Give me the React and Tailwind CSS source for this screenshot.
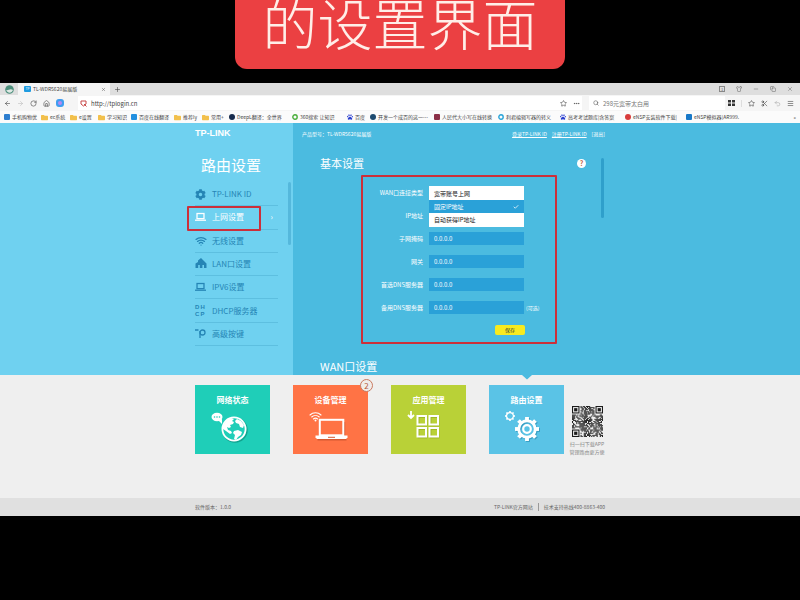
import {
  ArrowLeft,
  ArrowRight,
  RotateCw,
  House,
  Star,
  Ellipsis,
  Search,
  Scissors,
  Undo2,
  Menu,
  Plus,
  X,
  Minus,
  Copy,
  Shirt,
  Check,
  Wifi,
} from "lucide-react";
import { FaFolder, FaCog, FaPaw } from "react-icons/fa";

const bookmarks = [
  { label: "手机购物优", icon: "square", color: "text-[#2f7fd0]", width: "w-[25px]" },
  { label: "ec系统", icon: "folder", width: "w-[16px]" },
  { label: "e设置", icon: "folder", width: "w-[15px]" },
  { label: "学习知识", icon: "folder", width: "w-[20px]" },
  { label: "百度在线翻译", icon: "square", color: "text-[#2290e0]", width: "w-[31px]" },
  { label: "推荐ly", icon: "folder", width: "w-[15px]" },
  { label: "常用+", icon: "folder", width: "w-[14px]" },
  { label: "DeepL翻译：全世界", icon: "dot", color: "text-[#172b4d]", width: "w-[51px]" },
  { label: "360搜索 让知识", icon: "ring", color: "text-[#4aae3c]", width: "w-[43px]" },
  { label: "百度", icon: "paw", color: "text-[#2a3fd0]", width: "w-[11px]" },
  { label: "开发一个成百的这一…", icon: "dot", color: "text-[#1d4a70]", width: "w-[52px]" },
  { label: "人民代大小写在线转换", icon: "square", color: "text-[#8c3048]", width: "w-[52px]" },
  { label: "利君编辑写器的转义", icon: "ring", color: "text-[#28a4d8]", width: "w-[50px]" },
  { label: "高考考试题库|含答案", icon: "paw", color: "text-[#2a3fd0]", width: "w-[53px]" },
  { label: "eNSP安装软件下载|", icon: "dot", color: "text-[#d83c3c]", width: "w-[49px]" },
  { label: "eNSP模拟器(AR999.", icon: "square", color: "text-[#1878c8]", width: "w-[54px]" },
];

const menu = [
  { label: "TP-LINK ID", icon: <FaCog size={11} /> },
  { label: "上网设置", icon: <LaptopIcon />, active: true },
  { label: "无线设置", icon: <Wifi size={12} strokeWidth={2.5} /> },
  { label: "LAN口设置", icon: <LanIcon /> },
  { label: "IPV6设置", icon: <LaptopIcon /> },
  { label: "DHCP服务器", icon: <DhcpIcon /> },
  { label: "高级按键", icon: <KeyIcon /> },
];

const fields = [
  { id: "ip", label: "IP地址" },
  { id: "mask", label: "子网掩码" },
  { id: "gateway", label: "网关" },
  { id: "dns1", label: "首选DNS服务器" },
  { id: "dns2", label: "备用DNS服务器", note: "(可选)" },
];

const tiles = [
  { label: "网络状态", color: "bg-[#1fceb8]", icon: <GlobeIcon /> },
  { label: "设备管理", color: "bg-[#ff7345]", icon: <DeviceIcon />, badge: 2 },
  { label: "应用管理", color: "bg-[#b9d137]", icon: <AppsIcon /> },
  { label: "路由设置", color: "bg-[#5ac3e6]", icon: <GearsIcon />, current: true },
];

function LaptopIcon() {
  return (
    <svg width="11" height="10" viewBox="0 0 12 10" fill="none" stroke="currentColor" strokeWidth="1.4">
      <rect x="2.2" y="1.2" width="7.6" height="5.6" />
      <path d="M0 8.5h12" />
    </svg>
  );
}

function LanIcon() {
  return (
    <svg width="12" height="11" viewBox="0 0 12 11" fill="currentColor">
      <path d="M6 0 9 3 11.5 5.5V10H9V7H7.4v3H4.8V7H3.2v3H.5V5.5L3 4V2.5z" />
    </svg>
  );
}

function DhcpIcon() {
  return (
    <span className="grid w-[11px] grid-cols-2 font-['Liberation_Sans'] text-[6px] font-bold leading-[7px]">
      <span>D</span>
      <span>H</span>
      <span>C</span>
      <span>P</span>
    </span>
  );
}

function KeyIcon() {
  return (
    <svg width="12" height="11" viewBox="0 0 12 11" fill="none" stroke="currentColor" strokeWidth="1.3">
      <path d="M0 2h3.500M5 10V3" />
      <circle cx="7.500" cy="4.500" r="2.500" />
    </svg>
  );
}

function GlobeIcon() {
  return (
    <svg width="40" height="34" viewBox="0 0 40 34">
      <ellipse cx="6" cy="6" rx="5.5" ry="4.2" fill="#fff" />
      <path d="M7 9l4 4v-5z" fill="#fff" />
      <g fill="#1fceb8">
        <circle cx="3.5" cy="6" r=".8" />
        <circle cx="6" cy="6" r=".8" />
        <circle cx="8.5" cy="6" r=".8" />
      </g>
      <circle cx="24" cy="19" r="12" fill="none" stroke="#12a28f" strokeWidth="1.5" />
      <circle cx="23" cy="18" r="11.6" fill="#1fceb8" stroke="#fff" strokeWidth="1.8" />
      <path
        d="M12 15c2-4 4-7 8-8l3 1-2 2 2 1-1 2-3 1 1 2-2 1-2-1 1 3 3 1 1 2-2 1-4-3-3-2z"
        fill="#fff"
      />
      <path d="M23 20l4-1 4 2-1 3-3 2-2 3-2-1 1-4-2-2z" fill="#fff" />
      <path d="M26 8l4 2 3 4-1 3-3-1-1-3-3-1-1-2z" fill="#fff" />
    </svg>
  );
}

function DeviceIcon() {
  return (
    <svg width="40" height="34" viewBox="0 0 40 34" fill="none">
      <g stroke="#fff" strokeWidth="1.1" strokeLinecap="round">
        <path d="M1 4c3-3 8-3 11 0" />
        <path d="M2.7 6c2.2-2 5.4-2 7.6 0" />
        <path d="M4.4 8c1.3-1.1 2.9-1.1 4.2 0" />
      </g>
      <circle cx="6.5" cy="9.4" r="1" fill="#fff" />
      <path d="M35.500 11v13.500M8.500 28.800h29" stroke="#d65a32" strokeWidth="1.400" />
      <rect x="10.800" y="8.800" width="23.500" height="15.500" fill="#ff7345" stroke="#fff" strokeWidth="2" />
      <path d="M6.500 24.500h32v2l-1.500 1.500h-29l-1.500-1.500z" fill="#fff" />
      <path d="M19 26.300h7" stroke="#d65a32" />
    </svg>
  );
}

function AppsIcon() {
  return (
    <svg width="40" height="34" viewBox="0 0 40 34" fill="none">
      <path d="M4 0v7M1 4l3 3 3-3" stroke="#fff" strokeWidth="1.800" />
      <g stroke="#9db426" strokeWidth="1.800">
        <rect x="11.500" y="6" width="8" height="8.500" />
        <rect x="23.500" y="6" width="8" height="8.500" />
        <rect x="11.500" y="18" width="8" height="8.500" />
        <rect x="23.500" y="18" width="8" height="8.500" />
      </g>
      <g stroke="#fff" strokeWidth="2">
        <rect x="10.500" y="5" width="8.500" height="8.500" />
        <rect x="22.500" y="5" width="8.500" height="8.500" />
        <rect x="10.500" y="17" width="8.500" height="8.500" />
        <rect x="22.500" y="17" width="8.500" height="8.500" />
      </g>
    </svg>
  );
}

function Gear({ cx, cy, r, color }) {
  const teeth = [0, 45, 90, 135, 180, 225, 270, 315];
  return (
    <g>
      {teeth.map((a) => (
        <rect
          key={a}
          x={cx - r * 0.16}
          y={cy - r}
          width={r * 0.32}
          height={r * 0.4}
          fill={color}
          transform={`rotate(${a} ${cx} ${cy})`}
        />
      ))}
      <circle cx={cx} cy={cy} r={r * 0.69} fill="none" stroke={color} strokeWidth={r * 0.24} />
    </g>
  );
}

function GearsIcon() {
  return (
    <svg width="40" height="34" viewBox="0 0 40 34">
      <Gear cx={5} cy={5} r={5} color="#fff" />
      <Gear cx={23} cy={19} r={12} color="#3a9fc4" />
      <Gear cx={22} cy={18} r={12} color="#fff" />
      <circle cx="22" cy="18" r="3.800" fill="none" stroke="#fff" strokeWidth="2.200" />
    </svg>
  );
}

function QrCode() {
  const size = 29;
  const corners = [
    [0, 0],
    [size - 7, 0],
    [0, size - 7],
  ];
  const cells = [];
  let seed = 7;
  for (let y = 0; y < size; y++) {
    for (let x = 0; x < size; x++) {
      seed = (seed * 1103515245 + 12345) % 2147483648;
      const inCorner = corners.some(([cx, cy]) => x >= cx - 1 && x <= cx + 7 && y >= cy - 1 && y <= cy + 7);
      if (!inCorner && seed / 2147483648 < 0.62) {
        cells.push(<rect key={`${x}-${y}`} x={x} y={y} width="1" height="1" />);
      }
    }
  }
  return (
    <svg width="31" height="31" viewBox="0 0 29 29" fill="#1c1c1c">
      {cells}
      {corners.map(([x, y]) => (
        <g key={`c${x}-${y}`}>
          <rect x={x + 0.5} y={y + 0.5} width="6" height="6" fill="none" stroke="#1c1c1c" />
          <rect x={x + 2} y={y + 2} width="3" height="3" />
        </g>
      ))}
    </svg>
  );
}

function BookmarkIcon({ icon, color }) {
  if (icon === "folder") return <FaFolder size={7} className="shrink-0 text-[#f2c04c]" />;
  if (icon === "paw") return <FaPaw size={6} className={`shrink-0 ${color}`} />;
  return (
    <svg width="6" height="6" viewBox="0 0 6 6" className={`shrink-0 ${color}`} fill="currentColor">
      {icon === "square" && <rect width="6" height="6" rx="1" />}
      {icon === "dot" && <circle cx="3" cy="3" r="3" />}
      {icon === "ring" && <circle cx="3" cy="3" r="2.200" fill="none" stroke="currentColor" strokeWidth="1.400" />}
    </svg>
  );
}

function Browser() {
  return (
    <div className="text-[5px] leading-[8px] text-[#444]">
      {/* Tab strip */}
      <div className="flex h-[12px] items-center bg-[#dedede]">
        <span className="flex w-[18px] justify-center">
          <svg width="9" height="9" viewBox="0 0 9 9">
            <circle cx="4.500" cy="4.500" r="4.300" fill="#4c8f7c" />
            <path d="M1 5c2 1 4-2 7 0-1 3-5 4-7 0z" fill="#dfe9e4" />
          </svg>
        </span>
        <div className="flex h-full w-[92px] items-center bg-[#f5f5f5] pl-[6px] pr-1">
          <span className="mr-[2px] h-[6px] w-[7px] rounded-[1px] bg-[#1f9be0] text-center text-[3px] leading-[6px] text-white">
            TP
          </span>
          <span className="flex-1 whitespace-nowrap">TL-WDR5620易展版</span>
          <button aria-label="关闭标签">
            <X size={5} />
          </button>
        </div>
        <button aria-label="新标签" className="ml-1">
          <Plus size={7} />
        </button>
        <div className="ml-auto flex items-center gap-[11px] pr-[7px] text-[#666]">
          <span className="flex h-[6px] w-[6px] items-center justify-center border border-[#888] text-[4px]">1</span>
          <Shirt size={6} />
          <Minus size={6} />
          <Copy size={6} />
          <X size={6} />
        </div>
      </div>

      {/* Address bar */}
      <div className="flex h-[16px] items-center bg-[#f5f5f5] pl-1">
        <div className="flex w-[74px] items-center gap-[6px]">
          <ArrowLeft size={7} />
          <ArrowRight size={7} className="text-[#bbb]" />
          <RotateCw size={7} />
          <House size={7} />
          <svg width="8" height="8" viewBox="0 0 8 8">
            <rect width="8" height="8" rx="3" fill="#3f9df0" />
            <circle cx="4" cy="4" r="2" fill="#b58af0" />
          </svg>
        </div>
        <div className="flex h-[14px] flex-1 items-center gap-1 bg-white px-[2px]">
          <svg width="7" height="7" viewBox="0 0 7 7" fill="none" stroke="#c84848">
            <path d="M1 1h5v3L3.500 6 1 4zM4 4l2.500 2.500" />
          </svg>
          <input
            aria-label="地址"
            defaultValue="http://tplogin.cn"
            className="h-[10px] min-w-0 flex-1 bg-transparent text-[6px] outline-none"
          />
          <Star size={7} />
          <Ellipsis size={7} className="ml-[2px]" />
        </div>
        <div className="ml-[7px] flex h-[14px] w-[136px] items-center gap-1 bg-white px-1">
          <Search size={6} />
          <input
            aria-label="搜索"
            defaultValue="298元宽带太白用"
            className="h-[10px] min-w-0 flex-1 bg-transparent text-[6px] text-[#777] outline-none"
          />
        </div>
        <div className="flex items-center gap-[6px] pl-[3px] pr-[6px]">
          <svg width="7" height="6" viewBox="0 0 7 6" fill="#333">
            <path d="M0 0h3v2.500H0zM4 0h3v2.500H4zM0 3.500h3V6H0zM4 3.500h3V6H4z" />
          </svg>
          <span className="h-[7px] w-px bg-[#ddd]" />
          <Star size={7} />
          <Scissors size={7} />
          <Undo2 size={7} className="text-[#aaa]" />
          <Menu size={7} />
        </div>
      </div>

      {/* Bookmarks */}
      <div className="flex h-[12px] items-center gap-[4px] overflow-hidden bg-[#fbfbfb] px-1">
        {bookmarks.map((b) => (
          <a key={b.label} href="#" className="flex shrink-0 items-center gap-[2px]">
            <BookmarkIcon icon={b.icon} color={b.color} />
            <span className={`whitespace-nowrap ${b.width}`}>{b.label}</span>
          </a>
        ))}
        <span className="ml-auto">»</span>
      </div>
    </div>
  );
}

function Sidebar() {
  return (
    <aside className="relative w-[98px] shrink-0 bg-[#6fd1f0]">
      <div className="pt-[4px] font-['Liberation_Sans'] text-[9px] font-bold leading-[12px] text-white">TP-LINK</div>
      <h1 className="mt-[16px] pl-[6px] text-[15px] leading-[20px] text-white">路由设置</h1>
      <nav className="mt-[8px] flex h-[163px] w-[83px] flex-col">
        {menu.map((m) => (
          <a
            key={m.label}
            href="#"
            className={`flex flex-1 items-center border-b border-[#5dbfe0] text-[8px] leading-[12px] ${
              m.active ? "text-white" : "text-[#2585b5]"
            }`}
          >
            <span className="flex w-[17px] items-center">{m.icon}</span>
            <span>{m.label}</span>
            {m.active && <span className="ml-auto mr-[5px]">›</span>}
          </a>
        ))}
      </nav>
      {/* Highlight frame */}
      <div className="pointer-events-none absolute left-[-8px] top-[83px] h-[25px] w-[74px] rounded-[1px] border-2 border-[#cc2f3a]" />
      {/* Scrollbar */}
      <div className="absolute right-[2px] top-[59px] h-[63px] w-[3px] rounded-full bg-[#55b8dc]" />
    </aside>
  );
}

function Field({ field }) {
  return (
    <div className="flex h-[23px] items-center">
      <label htmlFor={field.id} className="w-[60px] text-right">
        {field.label}
      </label>
      <input
        id={field.id}
        defaultValue="0.0.0.0"
        className="ml-[6px] h-[13px] w-[95px] bg-[#2aa1d8] px-[5px] text-[6px] text-white outline-none"
      />
      {field.note && <span className="ml-[2px] text-[5px]">{field.note}</span>}
    </div>
  );
}

function Settings() {
  return (
    <main className="relative w-[312px] shrink-0 bg-[#4bbbe0] text-white">
      <div className="flex justify-between pl-[9px] pt-[7px] text-[5px] leading-[8px]">
        <span>产品型号：TL-WDR5620易展版</span>
        <span className="flex gap-[5px]">
          <a href="#" className="underline">登录TP-LINK ID</a>
          <a href="#" className="underline">注册TP-LINK ID</a>
          <a href="#">[退出]</a>
        </span>
      </div>
      <div className="mt-[17px] flex items-center justify-between pl-[27px] pr-[19px]">
        <h2 className="text-[11px] leading-[16px]">基本设置</h2>
        <button
          aria-label="帮助"
          className="h-[9px] w-[9px] rounded-full bg-white text-center text-[7px] font-bold leading-[9px] text-[#c25a3c]"
        >
          ?
        </button>
      </div>
      <form className="ml-[68px] mt-[4px] h-[169px] w-[196px] rounded-[1px] border-2 border-[#cc2f3a] pt-[4px] text-[6px] leading-[8px]">
        <div className="relative flex h-[23px] items-center">
          <label htmlFor="wan" className="w-[60px] text-right">WAN口连接类型</label>
          <select id="wan" defaultValue="static" className="ml-[6px] h-[13px] w-[95px] appearance-none bg-[#2aa1d8]">
            <option value="static">固定IP地址</option>
          </select>
          <ul
            role="listbox"
            aria-label="WAN口连接类型"
            className="absolute left-[66px] top-[5px] w-[95px] bg-white py-px leading-[13px] text-[#222]"
          >
            <li role="option" aria-selected="false" className="px-[5px]">宽带账号上网</li>
            <li role="option" aria-selected="true" className="flex items-center justify-between bg-[#2aa1d8] px-[5px] text-white">
              固定IP地址
              <Check size={6} strokeWidth={3} />
            </li>
            <li role="option" aria-selected="false" className="px-[5px]">自动获得IP地址</li>
          </ul>
        </div>
        {fields.map((f) => (
          <Field key={f.id} field={f} />
        ))}
        <button type="button" className="ml-[132px] mt-[6px] block h-[10px] w-[30px] rounded-[2px] bg-[#f8ea1f] text-[5px] leading-[10px] text-[#333]">
          保存
        </button>
      </form>
      <h2 className="mt-[14px] pl-[27px] text-[11px] leading-[16px]">WAN口设置</h2>
      {/* Scrollbar */}
      <div className="absolute right-px top-[35px] h-[60px] w-[3px] rounded-full bg-[#2f9fcb]" />
    </main>
  );
}

function Tile({ tile }) {
  return (
    <a href="#" className={`relative flex h-[69px] flex-1 flex-col items-center pt-[9px] text-white ${tile.color}`}>
      <span className="text-[8px] font-bold leading-[12px]">{tile.label}</span>
      <span className="mt-[5px] pr-[4px]">{tile.icon}</span>
      {tile.badge && (
        <span className="absolute -right-[5px] -top-[6px] h-[13px] w-[13px] rounded-full border border-[#c9785f] bg-[#f0ece9] text-center text-[8px] leading-[11px] text-[#b5583c]">
          {tile.badge}
        </span>
      )}
      {tile.current && (
        <svg width="10" height="5" viewBox="0 0 10 5" className="absolute -top-[10px] left-[33px]">
          <path d="M0 0h10L5 4.500z" fill="#4bbbe0" />
        </svg>
      )}
    </a>
  );
}

export default function App() {
  return (
    <div className="min-h-screen bg-black font-['Noto_Sans_CJK_SC',sans-serif]">
      <header className="flex h-[83px] items-start justify-center">
        <div className="flex h-[69px] w-[330px] items-end justify-center overflow-hidden rounded-b-[12px] bg-[#eb4042] pb-[20px]">
          <div className="whitespace-nowrap text-[55px] font-light leading-[55px] text-[#ffeee8]">的设置界面</div>
        </div>
      </header>

      <Browser />

      <div className="flex h-[252px]">
        <div className="flex-1 bg-[#6fd1f0]" />
        <Sidebar />
        <Settings />
        <div className="flex-1 bg-[#4bbbe0]" />
      </div>

      <div className="h-[123px] bg-[#efefef] pt-[10px]">
        <div className="mx-auto flex w-[410px] justify-between">
          <div className="flex w-[369px] gap-[23px]">
            {tiles.map((t) => (
              <Tile key={t.label} tile={t} />
            ))}
          </div>
          <div className="flex w-[36px] flex-col items-center whitespace-nowrap pt-[21px] text-center text-[5px] leading-[8px] text-[#888]">
            <QrCode />
            <span className="mt-[3px]">扫一扫下载APP</span>
            <span>管理路由更方便</span>
          </div>
        </div>
      </div>

      <footer className="flex h-[18px] items-center bg-[#e0e0e0] text-[5px] leading-[8px] text-[#666]">
        <div className="mx-auto flex w-[410px] justify-between">
          <span>软件版本：1.0.0</span>
          <span className="flex">
            <a href="#">TP-LINK官方网站</a>
            <span className="mx-[5px] w-px bg-[#999]" />
            <span>技术支持热线400-8863-400</span>
          </span>
        </div>
      </footer>
    </div>
  );
}
